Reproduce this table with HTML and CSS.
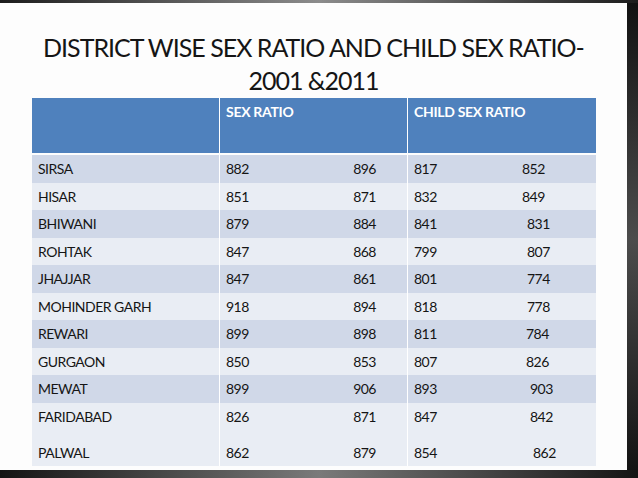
FILE: index.html
```html
<!DOCTYPE html>
<html lang="en">
<head>
<meta charset="utf-8">
<title>District wise sex ratio</title>
<link rel="stylesheet" href="styles.css">
</head>
<body>
<div class="frame">
  <div class="slide">
    <h1 class="title">DISTRICT WISE SEX RATIO AND CHILD SEX RATIO-<br>2001 &amp;2011</h1>
    <div class="table">
      <div class="row head">
        <div class="cell"></div>
        <div class="cell">SEX RATIO</div>
        <div class="cell">CHILD SEX RATIO</div>
      </div>
      <div class="row dark">
        <div class="cell">SIRSA</div>
        <div class="cell sr"><span>882</span><span>896</span></div>
        <div class="cell cs"><span class="w108">817</span><span>852</span></div>
      </div>
      <div class="row light">
        <div class="cell">HISAR</div>
        <div class="cell sr"><span>851</span><span>871</span></div>
        <div class="cell cs"><span class="w108">832</span><span>849</span></div>
      </div>
      <div class="row dark">
        <div class="cell">BHIWANI</div>
        <div class="cell sr"><span>879</span><span>884</span></div>
        <div class="cell cs"><span class="w113">841</span><span>831</span></div>
      </div>
      <div class="row light">
        <div class="cell">ROHTAK</div>
        <div class="cell sr"><span>847</span><span>868</span></div>
        <div class="cell cs"><span class="w113">799</span><span>807</span></div>
      </div>
      <div class="row dark">
        <div class="cell">JHAJJAR</div>
        <div class="cell sr"><span>847</span><span>861</span></div>
        <div class="cell cs"><span class="w113">801</span><span>774</span></div>
      </div>
      <div class="row light">
        <div class="cell">MOHINDER GARH</div>
        <div class="cell sr"><span>918</span><span>894</span></div>
        <div class="cell cs"><span class="w113">818</span><span>778</span></div>
      </div>
      <div class="row dark">
        <div class="cell">REWARI</div>
        <div class="cell sr"><span>899</span><span>898</span></div>
        <div class="cell cs"><span class="w112">811</span><span>784</span></div>
      </div>
      <div class="row light">
        <div class="cell">GURGAON</div>
        <div class="cell sr"><span>850</span><span>853</span></div>
        <div class="cell cs"><span class="w112">807</span><span>826</span></div>
      </div>
      <div class="row dark">
        <div class="cell">MEWAT</div>
        <div class="cell sr"><span>899</span><span>906</span></div>
        <div class="cell cs"><span class="w116">893</span><span>903</span></div>
      </div>
      <div class="row light last">
        <div class="cell stack"><span>FARIDABAD</span><span>PALWAL</span></div>
        <div class="cell stack">
          <div class="sr-line"><span>826</span><span>871</span></div>
          <div class="sr-line"><span>862</span><span>879</span></div>
        </div>
        <div class="cell stack">
          <div class="cs-line"><span class="w116">847</span><span>842</span></div>
          <div class="cs-line"><span class="w119">854</span><span>862</span></div>
        </div>
      </div>
    </div>
  </div>
</div>
</body>
</html>
```

FILE: styles.css
```css
html, body {
  margin: 0;
  padding: 0;
}

body {
  width: 638px;
  height: 478px;
  overflow: hidden;
  background: #151515;
}

.frame {
  box-sizing: border-box;
  width: 638px;
  height: 478px;
  padding: 3px 11px 8px 0;
  background:
    linear-gradient(to right, #1c1c1c, #8c8c8c 50%, #1c1c1c) top / 100% 3px no-repeat,
    linear-gradient(to right, #141414, #7a7a7a 50%, #141414) bottom / 100% 8px no-repeat,
    linear-gradient(to bottom, #111, #4c4c4c 50%, #111);
}

.slide {
  width: 627px;
  height: 467px;
  background: #fdfdfd;
  display: flex;
  flex-direction: column;
  align-items: flex-start;
  font-family: Lato, "Open Sans", sans-serif;
  color: #151515;
}

.title {
  align-self: stretch;
  margin: 0;
  padding-top: 28px;
  height: 67px;
  font-size: 25px;
  font-weight: 400;
  line-height: 33px;
  letter-spacing: -1px;
  text-align: center;
}

.table {
  margin-left: 32px;
  width: 564px;
  display: flex;
  flex-direction: column;
  font-size: 14px;
  letter-spacing: -0.5px;
}

.row {
  display: grid;
  grid-template-columns: 187px 187px 188px;
  column-gap: 1px;
  background: #fff;
}

.cell {
  display: flex;
  align-items: center;
  padding-left: 6px;
}

.head {
  height: 55px;
  margin-bottom: 2px;
}

.head .cell {
  background: #4f81bd;
  color: #fff;
  font-weight: 700;
  align-items: flex-start;
  padding-top: 5px;
  letter-spacing: -0.3px;
}

.dark, .light {
  height: 27.5px;
}

.dark .cell {
  background: #d0d8e8;
}

.light .cell {
  background: #e9edf4;
}

.sr, .sr-line {
  justify-content: space-between;
  padding-right: 31px;
}

.sr-line, .cs-line {
  display: flex;
  align-items: center;
  height: 27px;
}

.last {
  height: 63px;
}

.stack {
  flex-direction: column;
  align-items: stretch;
  justify-content: space-between;
  padding-top: 0;
  padding-bottom: 0;
}

.stack > span {
  display: flex;
  align-items: center;
  height: 27px;
}

.w108 { width: 108px; }
.w112 { width: 112px; }
.w113 { width: 113px; }
.w116 { width: 116px; }
.w119 { width: 119px; }
```
